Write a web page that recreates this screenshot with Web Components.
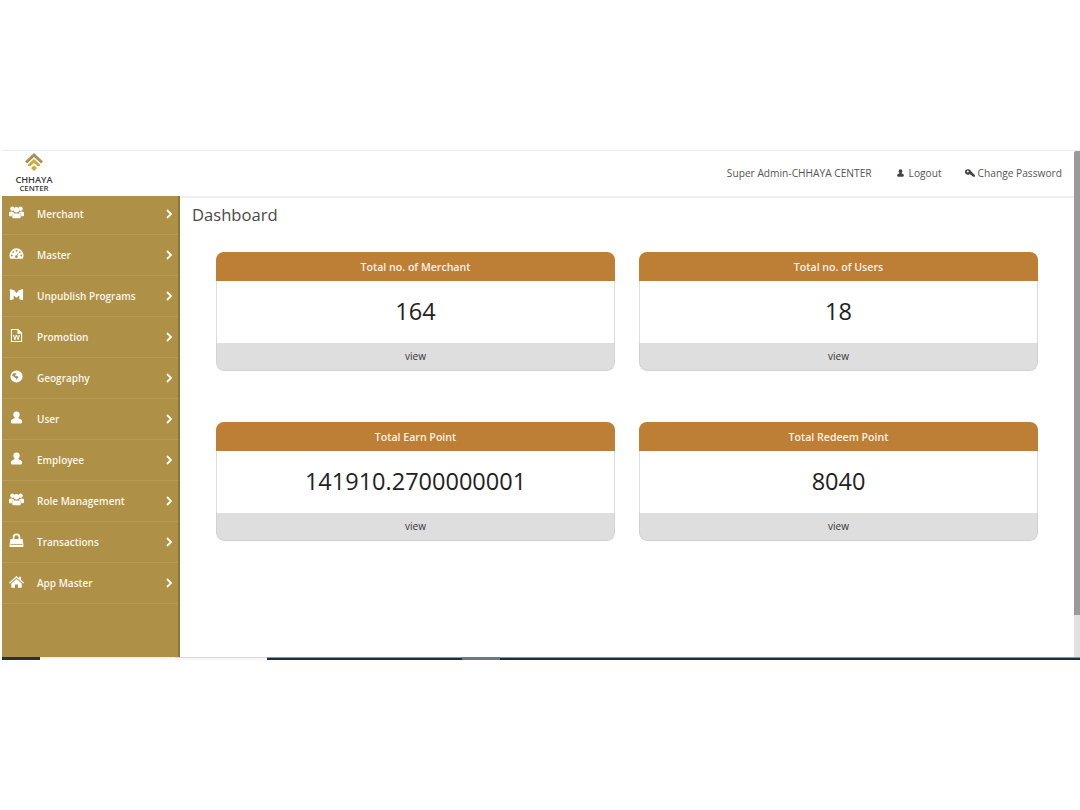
<!DOCTYPE html>
<html>
<head>
<meta charset="utf-8">
<title>Dashboard</title>
<style>
	html, body {
		margin: 0;
		background: #fff;
		overflow: hidden;
	}

	body {
		height: 810px;
		padding-top: 150px;
		box-sizing: border-box;
		font-family: "Open Sans", "Liberation Sans", sans-serif;
	}
</style>
</head>
<body>
	<admin-shell>
		<top-bar slot="top"></top-bar>
		<side-nav slot="side">
			<nav-item icon="users">Merchant</nav-item>
			<nav-item icon="gauge">Master</nav-item>
			<nav-item icon="map">Unpublish Programs</nav-item>
			<nav-item icon="word">Promotion</nav-item>
			<nav-item icon="globe">Geography</nav-item>
			<nav-item icon="user">User</nav-item>
			<nav-item icon="user">Employee</nav-item>
			<nav-item icon="users">Role Management</nav-item>
			<nav-item icon="bag">Transactions</nav-item>
			<nav-item icon="home">App Master</nav-item>
		</side-nav>
		<dash-board>
			<stat-card label="Total no. of Merchant" value="164"></stat-card>
			<stat-card label="Total no. of Users" value="18"></stat-card>
			<stat-card label="Total Earn Point" value="141910.2700000001"></stat-card>
			<stat-card label="Total Redeem Point" value="8040"></stat-card>
		</dash-board>
	</admin-shell>

<script>
const ICONS = {
	users: '<circle cx="3.600" cy="4" r="2.300"/><circle cx="12.400" cy="4" r="2.300"/><circle cx="8" cy="5" r="2.900"/><path d="M.3 7.500C1 6.800 2 6.700 3 7.100c.6.300 1.200.2 1.600 0 .3 1 1 1.900 1.900 2.300H4.300C3.500 9.400 3 10 3 10.800V12H1.300C.5 12 0 11.500 0 10.800V8.500c0-.4.100-.8.300-1zM15.700 7.500c-.7-.7-1.700-.8-2.700-.4-.6.300-1.200.2-1.600 0-.3 1-1 1.900-1.900 2.300h2.200c.8 0 1.300.6 1.300 1.400V12h1.700c.8 0 1.300-.5 1.300-1.200V8.500c0-.4-.1-.8-.3-1zM5 9h6c.9 0 1.500.6 1.500 1.500v2.200c0 .8-.6 1.300-1.400 1.300H4.900c-.8 0-1.400-.5-1.400-1.300v-2.200C3.500 9.600 4.100 9 5 9z"/>',
	gauge: '<path fill-rule="evenodd" d="M8 2.500a7.500 7.500 0 0 1 7.500 7.500c0 1.300-.3 2.500-.9 3.500H1.400C.8 12.500.5 11.300.5 10A7.500 7.500 0 0 1 8 2.500zM8 4a1 1 0 1 0 0 2 1 1 0 0 0 0-2zM4.500 5.500a1 1 0 1 0 0 2 1 1 0 0 0 0-2zM11.500 5.500a1 1 0 1 0 0 2 1 1 0 0 0 0-2zM3 9a1 1 0 1 0 0 2 1 1 0 0 0 0-2zM13 9a1 1 0 1 0 0 2 1 1 0 0 0 0-2zM10.200 6.600 8 10a1.400 1.400 0 1 0 1 .5z"/>',
	map: '<path d="M1 2 5.500 3.500 8 6.500 10.500 3.500 15 2V14L11 13V9L8 11.500 5 9V13L1 14z"/>',
	word: '<path fill-rule="evenodd" d="M2 1h8l4 4v10H2zM3.200 2.200v11.600h9.600V6H9V2.200zM4.300 7.500h1.200l.8 3.700.9-3.700h1.500l.9 3.700.8-3.700h1.200l-1.400 5.300H9.300L8 8.600 6.900 12.800H5.700z"/>',
	globe: '<path fill-rule="evenodd" d="M8 1.500a6.500 6.500 0 1 1 0 13 6.500 6.500 0 0 1 0-13zM5 4.500c-.6.500-1.500 1.500-1.700 3l2.200.7 1 1.300 1 .2.300 1.800 1.200-1.400 1-1.600-1.500-1.200-1.500.3-.5-1.300 1.500-.6-.5-1.200z"/>',
	user: '<path d="M8 1.500a3.400 3.400 0 0 1 3.400 3.400c0 1.300-.7 2.500-1.500 3.200 0 .5.200.8.700 1 1.700.6 3.400 1.300 3.400 3.400 0 1.200-.6 2-1.800 2H3.800c-1.200 0-1.800-.8-1.800-2 0-2.100 1.700-2.800 3.400-3.400.5-.2.700-.5.700-1C5.300 7.400 4.600 6.200 4.600 4.900A3.400 3.400 0 0 1 8 1.500z"/>',
	bag: '<path fill-rule="evenodd" d="M4 6.500V4.600a4 4 0 0 1 8 0v1.900h2.500l1 7.200c0 .8-.5 1.300-1.300 1.300H1.800C1 15 .5 14.500.5 13.700l1-7.200zM5.800 6.500h4.400V4.600a2.200 2.200 0 0 0-4.400 0zM1.500 11.800v.8h13v-.8z"/>',
	home: '<path d="M8 2.200 10.800 4.700V3h2v3.500L16 9.300l-.8.900L8 4 .8 10.200 0 9.300zM8 5.200l5.600 4.800V14c0 .4-.3.600-.6.600H9.600v-3.400H6.400v3.400H3c-.3 0-.6-.2-.6-.6V10z"/>',
};

class AdminShell extends HTMLElement {

	constructor() {
		super();

		this.attachShadow({ mode: 'open' });
		this.shadowRoot.innerHTML = `
			<style>
				:host {
					display: block;
					margin-left: 2px;
					border-top: 1px solid #ececec;
				}

				.frame {
					display: flex;
				}

				.main {
					flex: 1;
					min-width: 0;
				}

				.columns {
					display: flex;
					height: 461px;
				}

				.scrollbar {
					width: 6px;
					border-radius: 2px 0 0 0;
					background: linear-gradient(#9a9a9a 0, #9a9a9a 464px, #e2e2e2 464px);
				}

				.hscroll {
					display: flex;
					height: 3px;
				}

				.hscroll i:nth-child(1) { width: 38px; background: #2b2f33; }
				.hscroll i:nth-child(2) { width: 135px; background: linear-gradient(#f3ecdc 1px, #fbf8f1 1px); }
				.hscroll i:nth-child(3) { width: 92px; background: linear-gradient(#d9d9d9 1px, #f7f7f7 1px); }
				.hscroll i:nth-child(4) { width: 195px; background: linear-gradient(#7f98a8 1px, #1f2d3d 1px); }
				.hscroll i:nth-child(5) { width: 38px; background: #6d7780; }
				.hscroll i:nth-child(6) { flex: 1; background: linear-gradient(#7f98a8 1px, #1f2d3d 1px); }
			</style>
			<div class="frame">
				<div class="main">
					<slot name="top"></slot>
					<div class="columns">
						<slot name="side"></slot>
						<slot></slot>
					</div>
				</div>
				<div class="scrollbar"></div>
			</div>
			<div class="hscroll"><i></i><i></i><i></i><i></i><i></i><i></i></div>
		`;
	}

}

class TopBar extends HTMLElement {

	constructor() {
		super();

		this.attachShadow({ mode: 'open' });
		this.shadowRoot.innerHTML = `
			<style>
				:host {
					display: flex;
					align-items: center;
					box-sizing: border-box;
					height: 45px;
					padding-right: 12px;
					background: #fff;
					font-size: 10.200px;
					color: #555;
				}

				.logo {
					display: flex;
					flex-direction: column;
					align-items: center;
					width: 64px;
					margin-top: -2px;
					color: #3a3a3a;
				}

				.logo svg {
					display: block;
					margin-bottom: 4px;
				}

				.logo b {
					font-weight: 600;
					font-size: 9.200px;
					line-height: 9px;
					height: 9px;
				}

				.logo span {
					font-size: 7.800px;
					font-weight: 600;
					line-height: 8px;
					height: 8px;
				}

				.links {
					display: flex;
					align-items: center;
					margin-left: auto;
					padding-bottom: 1px;
				}

				.link {
					display: flex;
					align-items: center;
					gap: 4px;
					margin-left: 24px;
				}

				.link + .link {
					gap: 3px;
					margin-left: 23px;
				}

				.link svg {
					fill: #444;
				}
			</style>
			<div class="logo">
				<svg width="18" height="18" viewBox="0 0 18 18">
					<path fill="#a98f55" d="M9 0 18 8.500 16 10.500 9 4 2 10.500 0 8.500z"/>
					<path fill="#c9ab3e" d="M9 6 15 11.500 15 13 12.500 13 9 10 5.500 13 3 13 3 11.500zM9 12.500l3 2.500L9 18l-3-3z"/>
				</svg>
				<b>CHHAYA</b>
				<span>CENTER</span>
			</div>
			<div class="links">
				<span>Super Admin-CHHAYA CENTER</span>
				<span class="link"><svg width="9" height="10" viewBox="0 0 16 16">${ICONS.user}</svg>Logout</span>
				<span class="link"><svg width="10" height="10" viewBox="0 0 16 16"><path fill-rule="evenodd" d="M5.500 2a4.500 4.500 0 0 1 4.300 3.200L16 11.500V14h-2.500l-.8-1H11v-1.500H9.500L7.800 9.500A4.500 4.500 0 1 1 5.500 2zM4.500 4a1.500 1.500 0 1 0 0 3 1.500 1.500 0 0 0 0-3z"/></svg>Change Password</span>
			</div>
		`;
	}

}

class SideNav extends HTMLElement {

	constructor() {
		super();

		this.attachShadow({ mode: 'open' });
		this.shadowRoot.innerHTML = `
			<style>
				:host {
					display: block;
					box-sizing: border-box;
					flex: none;
					width: 178px;
					height: 100%;
					background: #af9047;
					border-right: 2px solid #8f7639;
				}
			</style>
			<slot></slot>
		`;
	}

}

class NavItem extends HTMLElement {

	constructor() {
		super();

		this.attachShadow({ mode: 'open' });
		this.shadowRoot.innerHTML = `
			<style>
				:host {
					display: flex;
					align-items: center;
					box-sizing: border-box;
					height: 41px;
					padding: 0 6px 0 7px;
					border-bottom: 1px solid #b89b55;
					font-size: 10px;
					font-weight: 600;
					color: #fbf6ea;
				}

				:host(:first-child) {
					height: 39px;
					padding-bottom: 2px;
				}

				.icon {
					width: 15px;
					height: 15px;
					margin: -4px 13px 0 0;
					fill: #fff;
					flex: none;
				}

				.label {
					flex: 1;
					white-space: nowrap;
				}

				.chevron {
					fill: none;
					stroke: #fff;
					stroke-width: 1.800;
				}
			</style>
			<svg class="icon" viewBox="0 0 16 16"></svg>
			<span class="label"><slot></slot></span>
			<svg class="chevron" width="6" height="10" viewBox="0 0 6 10"><path d="M1 1l4 4-4 4"/></svg>
		`;
	}

	connectedCallback() {
		this.shadowRoot.querySelector('.icon').innerHTML = ICONS[this.getAttribute('icon')];
	}

}

class DashBoard extends HTMLElement {

	constructor() {
		super();

		this.attachShadow({ mode: 'open' });
		this.shadowRoot.innerHTML = `
			<style>
				:host {
					display: block;
					flex: 1;
					padding: 5px 36px 0 12px;
					border-top: 2px solid #efefef;
				}

				h1 {
					margin: 0;
					font-size: 16.600px;
					font-weight: 400;
					line-height: 24px;
					color: #4a4a4a;
				}

				.grid {
					display: grid;
					grid-template-columns: 399px 399px;
					column-gap: 24px;
					row-gap: 51px;
					margin: 25px 0 0 24px;
				}
			</style>
			<h1>Dashboard</h1>
			<div class="grid"><slot></slot></div>
		`;
	}

}

class StatCard extends HTMLElement {

	constructor() {
		super();

		this.attachShadow({ mode: 'open' });
		this.shadowRoot.innerHTML = `
			<style>
				:host {
					display: block;
					height: 119px;
					border-radius: 8px;
					overflow: hidden;
					text-align: center;
				}

				.head {
					height: 29px;
					background: #bd7f36;
					color: #f9f1e6;
					font-size: 10.600px;
					font-weight: 600;
					line-height: 30px;
				}

				.value {
					box-sizing: border-box;
					height: 62px;
					border: solid #dcdcdc;
					border-width: 0 1px;
					font-size: 23.500px;
					line-height: 61px;
					color: #222;
				}

				.foot {
					box-sizing: border-box;
					height: 28px;
					border: solid #d2d2d2;
					border-width: 0 1px 1px;
					border-radius: 0 0 8px 8px;
					background: #dedede;
					font-size: 10px;
					line-height: 27px;
					color: #333;
				}
			</style>
			<div class="head"></div>
			<div class="value"></div>
			<div class="foot">view</div>
		`;
	}

	connectedCallback() {
		this.shadowRoot.querySelector('.head').textContent = this.getAttribute('label');
		this.shadowRoot.querySelector('.value').textContent = this.getAttribute('value');
	}

}

customElements.define('admin-shell', AdminShell);
customElements.define('top-bar', TopBar);
customElements.define('side-nav', SideNav);
customElements.define('nav-item', NavItem);
customElements.define('dash-board', DashBoard);
customElements.define('stat-card', StatCard);
</script>
</body>
</html>
